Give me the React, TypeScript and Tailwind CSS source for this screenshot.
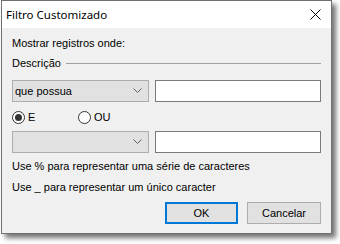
import React from "react";

function Chevron() {
  return (
    <svg width="9" height="6" viewBox="0 0 9 6" className="block">
      <path d="M0.5 0.5 L4.5 4.5 L8.5 0.5" fill="none" stroke="#606060" strokeWidth="1" />
    </svg>
  );
}

function Combo({ text }: { text?: string }) {
  return (
    <div className="flex h-[22px] w-[137px] items-center justify-between border border-[#adadad] bg-[#e1e1e1] pl-[2px] pr-[6px]">
      <span>{text ?? ""}</span>
      <Chevron />
    </div>
  );
}

function TextBox() {
  return <div className="h-[22px] flex-1 border border-[#7a7a7a] bg-white" />;
}

function Radio({ checked, label }: { checked?: boolean; label: string }) {
  return (
    <div className="flex items-center gap-[3px]">
      <div className="flex h-[13px] w-[13px] items-center justify-center rounded-full border border-[#333333] bg-white">
        {checked ? <div className="h-[7px] w-[7px] rounded-full bg-[#333333]" /> : null}
      </div>
      <span>{label}</span>
    </div>
  );
}

export default function App() {
  return (
    <div className="h-[244px] w-[340px] bg-white pl-[1px]" style={{ fontFamily: '"Liberation Sans", Arial, sans-serif' }}>
      <div className="flex h-[234px] w-[331px] flex-col border border-[#707070] shadow-[4px_4px_5px_rgba(0,0,0,0.55)]">
        <div className="flex h-[27px] items-center justify-between bg-white pl-[4px] pr-[10px]">
          <span className="text-[11.5px] text-black" style={{ fontFamily: '"Noto Sans", sans-serif' }}>
            Filtro Customizado
          </span>
          <svg width="11" height="11" viewBox="0 0 11 11" className="block">
            <path d="M0.5 0.5 L10.5 10.5 M10.5 0.5 L0.5 10.5" stroke="#000" strokeWidth="1" fill="none" />
          </svg>
        </div>
        <div className="flex flex-1 flex-col bg-[#f0f0f0] pl-[10px] pr-[10px] pt-[9px] text-[11px] leading-[13px] text-black">
          <div>Mostrar registros onde:</div>
          <div className="mt-[7px] flex items-center gap-[5px]">
            <span>Descrição</span>
            <div className="h-px flex-1 bg-[#a0a0a0]" />
          </div>
          <div className="mt-[10px] flex gap-[6px]">
            <Combo text="que possua" />
            <TextBox />
          </div>
          <div className="mt-[9px] flex h-[13px] items-center">
            <div className="w-[66px]">
              <Radio checked label="E" />
            </div>
            <Radio label="OU" />
          </div>
          <div className="mt-[7px] flex gap-[6px]">
            <Combo />
            <TextBox />
          </div>
          <div className="mt-[7px]">Use % para representar uma série de caracteres</div>
          <div className="mt-[8px]">Use _ para representar um único caracter</div>
          <div className="mt-[8px] flex justify-end gap-[9px] text-[11px]">
            <div className="flex h-[22px] w-[73px] items-center justify-center border-2 border-[#0078d7] bg-[#e1e1e1]">OK</div>
            <div className="flex h-[22px] w-[74px] items-center justify-center border border-[#adadad] bg-[#e1e1e1]">Cancelar</div>
          </div>
        </div>
      </div>
    </div>
  );
}
